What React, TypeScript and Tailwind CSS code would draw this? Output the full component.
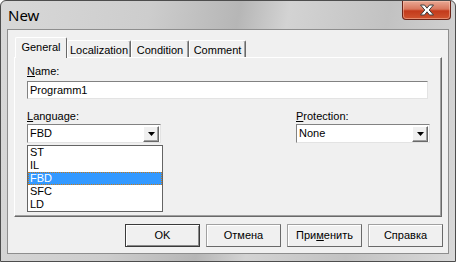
import React from 'react';

const font = "font-['Liberation_Sans',Arial,sans-serif] text-[11px] leading-[13px] text-black";

const CloseButton: React.FC = () => (
  <div className="w-[49px] h-[19px] -mr-[2px] rounded-b-[4px] border border-t-0 border-[#6b2418] bg-[linear-gradient(180deg,#e9a894_0%,#d9775d_45%,#c33a1b_55%,#d0542f_100%)] shadow-[inset_0_0_0_1px_rgba(255,210,190,0.45)] flex items-center justify-center">
    <svg width="16" height="12" viewBox="0 0 16 12">
      <path
        d="M1.5 1 H5.5 L8 4.2 L10.5 1 H14.5 L10.2 6 L14.5 11 H10.5 L8 7.8 L5.5 11 H1.5 L5.8 6 Z"
        fill="#ffffff"
        stroke="#3e3e3e"
        strokeWidth="1"
        strokeLinejoin="round"
      />
    </svg>
  </div>
);

const DropArrow: React.FC = () => (
  <div className="w-[16px] h-[16px] bg-[#f0f0f0] border border-t-white border-l-white border-r-[#696969] border-b-[#696969] shadow-[inset_-1px_-1px_0_#a0a0a0] flex items-center justify-center">
    <svg width="7" height="4" viewBox="0 0 7 4">
      <path d="M0 0 H7 L3.5 4 Z" fill="#000" />
    </svg>
  </div>
);

const Combo: React.FC<{ value: string }> = ({ value }) => (
  <div className="w-[134px] h-[19px] bg-white border border-t-[#828282] border-l-[#828282] border-r-[#e3e3e3] border-b-[#e3e3e3] flex items-center justify-between pl-[2px] pr-px">
    <span>{value}</span>
    <DropArrow />
  </div>
);

const Tab: React.FC<{ label: string; width: string; active?: boolean }> = ({ label, width, active }) => (
  <div
    className={
      active
        ? `${width} h-[21px] -mb-px relative z-10 bg-[#f0f0f0] border-t border-l border-r border-t-white border-l-white border-r-[#696969] rounded-t-[2px] pt-[3px] text-center`
        : `${width} h-[17px] bg-[#f0f0f0] border-t border-l border-r border-t-white border-l-white border-r-[#696969] shadow-[inset_-1px_0_0_#a0a0a0] rounded-t-[2px] pt-[3px] text-center`
    }
  >
    {label}
  </div>
);

const Button: React.FC<{ children: React.ReactNode; primary?: boolean }> = ({ children, primary }) => (
  <div
    className={
      primary
        ? 'w-[75px] h-[23px] bg-[#f0f0f0] border border-[#3a3a3a] shadow-[inset_1px_1px_0_#ffffff,inset_-1px_-1px_0_#8a8a8a] flex items-center justify-center'
        : 'w-[75px] h-[23px] bg-[#f0f0f0] border border-[#a0a0a0] border-r-[#696969] border-b-[#696969] shadow-[inset_1px_1px_0_#ffffff] flex items-center justify-center'
    }
  >
    {children}
  </div>
);

const languages = ['ST', 'IL', 'FBD', 'SFC', 'LD'];

export default function App() {
  return (
    <div className={`${font} w-[456px] h-[262px] flex flex-col border border-[#4d4d4d] rounded-t-[6px] bg-[linear-gradient(100deg,#d8d8d8_0%,#cdcdcd_30%,#b6b6b6_48%,#d3d3d3_58%,#c2c2c2_78%,#d9d9d9_100%)] px-[6px] pb-[7px] overflow-hidden`}>
      {/* Title bar */}
      <div className="h-[28px] shrink-0 flex items-start justify-between">
        <span className="font-['Noto_Sans',sans-serif] text-[15px] leading-[20px] mt-[4px] ml-px">New</span>
        <CloseButton />
      </div>

      {/* Client area */}
      <div className="flex-1 border border-[#8e8e8e] bg-[#f0f0f0] flex flex-col">
        <div className="mx-[6px] mt-[7px]">
          {/* Tabs */}
          <div className="flex items-end h-[20px] pl-px">
            <Tab label="General" width="w-[52px]" active />
            <Tab label="Localization" width="w-[64px]" />
            <Tab label="Condition" width="w-[58px]" />
            <Tab label="Comment" width="w-[57px]" />
          </div>

          {/* Tab page */}
          <div className="h-[160px] border border-t-white border-l-white border-r-[#696969] border-b-[#696969] shadow-[inset_-1px_-1px_0_#a0a0a0] pl-[12px] pr-[13px]">
            <div className="mt-[7px]">
              <span className="underline underline-offset-[1px]">N</span>ame:
            </div>
            <div className="mt-[3px] h-[18px] bg-white border border-t-[#828282] border-l-[#828282] border-r-[#e3e3e3] border-b-[#e3e3e3] flex items-center pl-[2px]">
              Programm1
            </div>

            <div className="mt-[11px] flex justify-between pr-[-3px]">
              <div className="relative">
                <div>
                  <span className="underline underline-offset-[1px]">L</span>anguage:
                </div>
                <div className="mt-px">
                  <Combo value="FBD" />
                </div>
                {/* Open dropdown list */}
                <div className="absolute left-0 top-[35px] w-[136px] h-[67px] bg-white border border-[#646464] z-20">
                  {languages.map((l) => (
                    <div
                      key={l}
                      className={
                        l === 'FBD'
                          ? 'h-[13px] pl-[2px] bg-[#3399ff] text-white outline-1 outline-dotted outline-[#c77a1a] -outline-offset-1'
                          : 'h-[13px] pl-[2px]'
                      }
                    >
                      {l}
                    </div>
                  ))}
                </div>
              </div>

              <div className="-mr-[2px]">
                <div>
                  <span className="underline underline-offset-[1px]">P</span>rotection:
                </div>
                <div className="mt-px">
                  <Combo value="None" />
                </div>
              </div>
            </div>
          </div>
        </div>

        {/* Buttons */}
        <div className="mt-[7px] flex justify-end gap-[6px] pr-[5px]">
          <Button primary>OK</Button>
          <Button>Отмена</Button>
          <Button>
            <span>
              При<span className="underline underline-offset-[1px]">м</span>енить
            </span>
          </Button>
          <Button>Справка</Button>
        </div>
      </div>
    </div>
  );
}
